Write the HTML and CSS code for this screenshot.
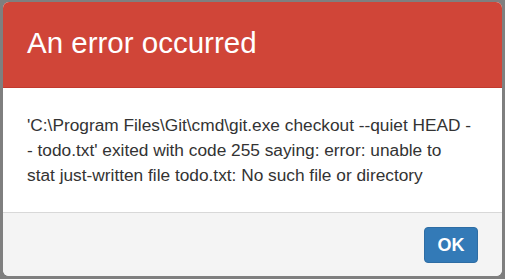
FILE: index.html
```html
<!DOCTYPE html>
<html>
<head>
<meta charset="utf-8">
<link rel="stylesheet" href="styles.css">
</head>
<body>
<div class="modal">
  <div class="modal-header">
    <h4 class="modal-title">An error occurred</h4>
  </div>
  <div class="modal-body">
    <p class="message">'C:\Program Files\Git\cmd\git.exe checkout --quiet HEAD -<wbr>- todo.txt' exited with code 255 saying: error: unable to stat just-written file todo.txt: No such file or directory</p>
  </div>
  <div class="modal-footer">
    <button class="btn-ok">OK</button>
  </div>
</div>
</body>
</html>
```
FILE: styles.css
```css
html, body {
  margin: 0;
  padding: 0;
  width: 505px;
  height: 279px;
  overflow: hidden;
  background: #7f7f7f;
  font-family: "Liberation Sans", Arial, sans-serif;
}
.modal {
  margin: 2px 0 0 3px;
  width: 499px;
  height: 274px;
  background: #fff;
  border-radius: 6px;
  overflow: hidden;
  display: flex;
  flex-direction: column;
}
.modal-header {
  height: 85px;
  background: #d04538;
  border-bottom: 1px solid #c23a2e;
  display: flex;
  align-items: center;
  padding: 0 24px;
}
.modal-title {
  margin: 0;
  color: #fff;
  font-weight: normal;
  font-size: 29.5px;
  line-height: 32px;
  padding-bottom: 3px;
}
.modal-body {
  height: 124px;
  padding: 0 29px 0 24px;
  display: flex;
  align-items: center;
}
.message {
  margin: 0;
  color: #333;
  font-size: 17.3px;
  line-height: 25px;
}
.modal-footer {
  flex: 1;
  background: #f4f4f4;
  border-top: 1px solid #d8d8d8;
  display: flex;
  justify-content: flex-end;
  align-items: flex-start;
  padding: 14px 24px 0;
}
.btn-ok {
  width: 54px;
  height: 36px;
  background: #337ab7;
  border: 1px solid #2e6da4;
  border-radius: 4px;
  color: #fff;
  font-family: "Liberation Sans", Arial, sans-serif;
  font-weight: bold;
  font-size: 18px;
  padding: 0;
}
```
